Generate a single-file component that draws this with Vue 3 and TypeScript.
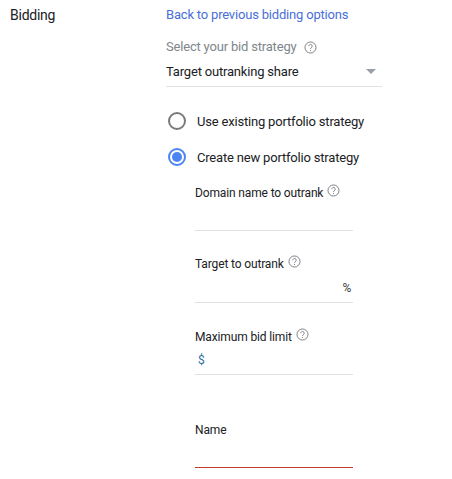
<script setup lang="ts">
const helpPath = 'M8 1.2a6.8 6.8 0 1 0 0 13.6A6.8 6.8 0 0 0 8 1.2z'
const questionPath = 'M5.9 6.4a2.1 2.1 0 1 1 3.3 1.7C8.4 8.7 8 9.1 8 10M8 11.2v1.1'
</script>

<template>
  <div class="page">
    <div class="section-title">Bidding</div>
    <div class="content">
      <a class="back-link">Back to previous bidding options</a>

      <div class="strategy-label">
        <span>Select your bid strategy</span>
        <svg class="help help-first" viewBox="0 0 16 16">
          <path :d="helpPath" />
          <path :d="questionPath" />
        </svg>
      </div>
      <div class="select">
        <span>Target outranking share</span>
        <i class="arrow"></i>
      </div>

      <div class="radio-row first">
        <span class="radio"></span>
        <span>Use existing portfolio strategy</span>
      </div>
      <div class="radio-row second">
        <span class="radio checked"></span>
        <span>Create new portfolio strategy</span>
      </div>

      <div class="fields">
        <div class="field domain">
          <div class="field-label">
            <span>Domain name to outrank</span>
            <svg class="help" viewBox="0 0 16 16"><path :d="helpPath" /><path :d="questionPath" /></svg>
          </div>
          <div class="input"></div>
        </div>
        <div class="field target">
          <div class="field-label">
            <span>Target to outrank</span>
            <svg class="help" viewBox="0 0 16 16"><path :d="helpPath" /><path :d="questionPath" /></svg>
          </div>
          <div class="input percent"><span>%</span></div>
        </div>
        <div class="field limit">
          <div class="field-label">
            <span>Maximum bid limit</span>
            <svg class="help" viewBox="0 0 16 16"><path :d="helpPath" /><path :d="questionPath" /></svg>
          </div>
          <div class="input dollar"><span>$</span></div>
        </div>
        <div class="field name">
          <div class="field-label"><span>Name</span></div>
          <div class="input active"></div>
        </div>
      </div>
    </div>
  </div>
</template>

<style>
html,
body {
  background: #fff;
}
</style>

<style scoped>
.page {
  display: flex;
  width: 452px;
  height: 479px;
  overflow: hidden;
  font-family: Roboto, "Liberation Sans", sans-serif;
  color: #202124;
  font-size: 13px;
  letter-spacing: -0.19px;
}
.section-title {
  width: 156px;
  padding: 7px 0 0 10px;
  font-size: 14px;
  line-height: 16px;
  letter-spacing: -0.25px;
}
.content {
  width: 216px;
  padding-top: 7px;
}
.back-link {
  display: block;
  color: #4a6fd8;
  line-height: 16px;
}
.strategy-label {
  display: flex;
  align-items: center;
  margin-top: 16px;
  line-height: 16px;
  color: #80868b;
}
.help {
  display: block;
  width: 13px;
  height: 13px;
  margin-left: 4px;
  fill: none;
  stroke: #6f7377;
  stroke-width: 1.1;
}
.help-first {
  margin-left: 8px;
}
.select {
  display: flex;
  justify-content: space-between;
  align-items: center;
  height: 30px;
  padding-right: 6px;
  margin-top: 1px;
  border-bottom: 1px solid #e0e0e0;
}
.arrow {
  width: 0;
  height: 0;
  border-left: 5px solid transparent;
  border-right: 5px solid transparent;
  border-top: 5px solid #9aa0a6;
}
.radio-row {
  display: flex;
  align-items: center;
  height: 20px;
  padding-left: 2px;
}
.radio-row.first {
  margin-top: 24px;
}
.radio-row.second {
  margin-top: 16px;
}
.radio {
  box-sizing: border-box;
  width: 18px;
  height: 18px;
  margin-right: 11px;
  border: 2px solid #7b7b7b;
  border-radius: 50%;
}
.radio.checked {
  display: flex;
  align-items: center;
  justify-content: center;
  border-color: #4d84f4;
}
.radio.checked::after {
  content: "";
  width: 10px;
  height: 10px;
  border-radius: 50%;
  background: #4d84f4;
}
.fields {
  width: 158px;
  margin-left: 29px;
}
.field-label {
  display: flex;
  align-items: flex-start;
  height: 16px;
  font-size: 12px;
  line-height: 16px;
  letter-spacing: -0.14px;
}
.field-label .help {
  margin-top: -1px;
}
.input {
  box-sizing: border-box;
  border-bottom: 1px solid #e0e0e0;
  font-size: 12px;
  color: #3c4043;
}
.domain {
  margin-top: 18px;
}
.domain .input {
  height: 30px;
}
.target {
  margin-top: 25px;
}
.percent {
  display: flex;
  align-items: flex-end;
  justify-content: flex-end;
  height: 31px;
  padding: 0 2px 7px 0;
}
.limit {
  margin-top: 26px;
}
.dollar {
  display: flex;
  align-items: flex-end;
  height: 30px;
  padding: 0 0 7px 3px;
  color: #2f6f9f;
}
.name {
  margin-top: 47px;
}
.input.active {
  height: 30px;
  border-bottom-color: #c53929;
}
</style>
